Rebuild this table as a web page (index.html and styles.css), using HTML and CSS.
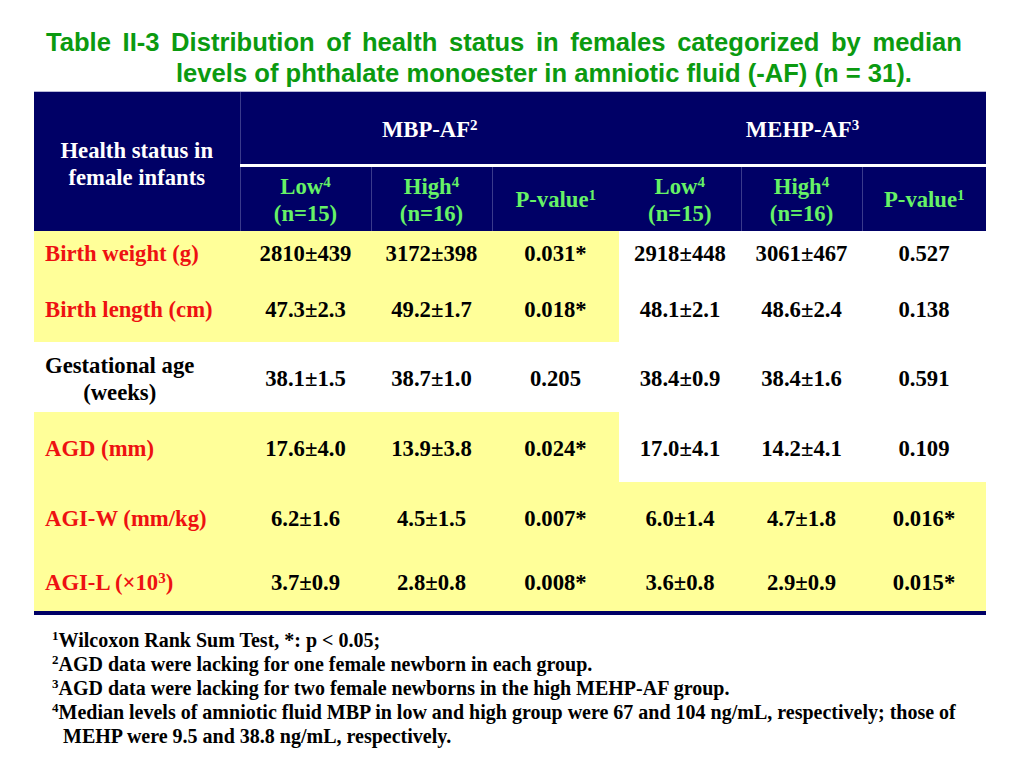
FILE: index.html
```html
<!DOCTYPE html>
<html lang="en">
<head>
<meta charset="utf-8">
<title>Table II-3</title>
<link rel="stylesheet" href="styles.css">
</head>
<body>
<h1 class="title">Table II-3 Distribution of health status in females categorized by median levels of phthalate monoester in amniotic fluid (-AF) (n = 31).</h1>
<table class="data">
  <colgroup>
    <col class="c-label"><col class="c-low"><col class="c-high"><col class="c-p"><col class="c-low2"><col class="c-high2"><col class="c-p2">
  </colgroup>
  <thead>
    <tr class="h1">
      <th rowspan="2" class="hlabel">Health status in<br>female infants</th>
      <th colspan="3" class="group first">MBP-AF<sup>2</sup></th>
      <th colspan="3" class="group">MEHP-AF<sup>3</sup></th>
    </tr>
    <tr class="h2">
      <th class="sub sep">Low<sup>4</sup><br>(n=15)</th>
      <th class="sub sep">High<sup>4</sup><br>(n=16)</th>
      <th class="sub sep">P-value<sup>1</sup></th>
      <th class="sub">Low<sup>4</sup><br>(n=15)</th>
      <th class="sub sep">High<sup>4</sup><br>(n=16)</th>
      <th class="sub sep">P-value<sup>1</sup></th>
    </tr>
  </thead>
  <tbody>
    <tr class="r1">
      <td class="label red">Birth weight (g)</td>
      <td>2810±439</td><td>3172±398</td><td>0.031*</td>
      <td class="w">2918±448</td><td class="w">3061±467</td><td class="w">0.527</td>
    </tr>
    <tr class="r2">
      <td class="label red">Birth length (cm)</td>
      <td>47.3±2.3</td><td>49.2±1.7</td><td>0.018*</td>
      <td class="w">48.1±2.1</td><td class="w">48.6±2.4</td><td class="w">0.138</td>
    </tr>
    <tr class="r3 white">
      <td class="label"><span class="two">Gestational age<br>(weeks)</span></td>
      <td>38.1±1.5</td><td>38.7±1.0</td><td>0.205</td>
      <td>38.4±0.9</td><td>38.4±1.6</td><td>0.591</td>
    </tr>
    <tr class="r4">
      <td class="label red">AGD (mm)</td>
      <td>17.6±4.0</td><td>13.9±3.8</td><td>0.024*</td>
      <td class="w">17.0±4.1</td><td class="w">14.2±4.1</td><td class="w">0.109</td>
    </tr>
    <tr class="r5">
      <td class="label red">AGI-W (mm/kg)</td>
      <td>6.2±1.6</td><td>4.5±1.5</td><td>0.007*</td>
      <td>6.0±1.4</td><td>4.7±1.8</td><td>0.016*</td>
    </tr>
    <tr class="r6">
      <td class="label red">AGI-L (×10<sup>3</sup>)</td>
      <td>3.7±0.9</td><td>2.8±0.8</td><td>0.008*</td>
      <td>3.6±0.8</td><td>2.9±0.9</td><td>0.015*</td>
    </tr>
  </tbody>
</table>
<div class="notes">
  <p><sup>1</sup>Wilcoxon Rank Sum Test, *: p &lt; 0.05;</p>
  <p><sup>2</sup>AGD data were lacking for one female newborn in each group.</p>
  <p><sup>3</sup>AGD data were lacking for two female newborns in the high MEHP-AF group.</p>
  <p><sup>4</sup>Median levels of amniotic fluid MBP in low and high group were 67 and 104 ng/mL, respectively; those of<br><span class="cont">MEHP were 9.5 and 38.8 ng/mL, respectively.</span></p>
</div>
</body>
</html>
```
FILE: styles.css
```css
* { box-sizing: border-box; }
html, body { margin: 0; padding: 0; background: #ffffff; }
body { width: 1024px; height: 768px; overflow: hidden; font-family: "Liberation Serif", "Times New Roman", serif; }

.title {
  margin: 27px 0 0 46px;
  width: 916px;
  padding-left: 130px;
  text-indent: -130px;
  text-align: justify;
  font-family: "Liberation Sans", Arial, sans-serif;
  font-weight: bold;
  font-size: 25.6px;
  line-height: 31px;
  color: #0b9a10;
}

.data {
  margin: 2px 0 0 34px;
  width: 952px;
  border-collapse: collapse;
  table-layout: fixed;
  font-weight: bold;
  font-size: 22.7px;
  color: #000;
}
.c-label { width: 206px; }
.c-low { width: 131px; }
.c-high { width: 121px; }
.c-p { width: 127px; }
.c-low2 { width: 122px; }
.c-high2 { width: 121px; }
.c-p2 { width: 124px; }

.data thead th {
  background: #000066;
  font-weight: bold;
  padding: 0;
  text-align: center;
  line-height: 27px;
}
.data thead tr.h1 { height: 74px; }
.data thead tr.h1 th { border-top: 1px solid #b8b8d8; }
.data thead tr.h2 { height: 65px; }
.hlabel { color: #ffffff; vertical-align: middle; padding-top: 6px !important; }
.group {
  color: #ffffff;
  border-bottom: 3px solid #ffffff;
  vertical-align: middle;
  padding-top: 2px !important;
}
.group.first { border-left: 1px solid #3a3a8c; }
.sub { color: #66f266; vertical-align: middle; padding-top: 2px !important; }
.sub.sep { border-left: 1px solid #3a3a8c; }
.data sup { font-size: 15px; line-height: 0; vertical-align: 7px; }

.data tbody td {
  background: #ffff99;
  text-align: center;
  vertical-align: middle;
  padding: 4px 0 0 0;
  line-height: 27px;
}
.data tbody td.w { background: #ffffff; }
.data tbody tr.white td { background: #ffffff; }
.data tbody td.label { text-align: left; padding-left: 11px; }
.data tbody td.red { color: #ee1111; }
.two { display: inline-block; text-align: center; }

.r1 { height: 42px; }
.r2 { height: 69px; }
.r3 { height: 70px; }
.r4 { height: 70px; }
.r5 { height: 69px; }
.r6 { height: 62px; }
.r6 td { border-bottom: 4px solid #000066; }

.notes {
  margin: 13px 0 0 52px;
  font-weight: bold;
  font-size: 20px;
  line-height: 24px;
  color: #000;
}
.notes p { margin: 0; }
.notes sup { font-size: 13px; line-height: 0; vertical-align: 7px; }
.notes .cont { padding-left: 11px; }
```
